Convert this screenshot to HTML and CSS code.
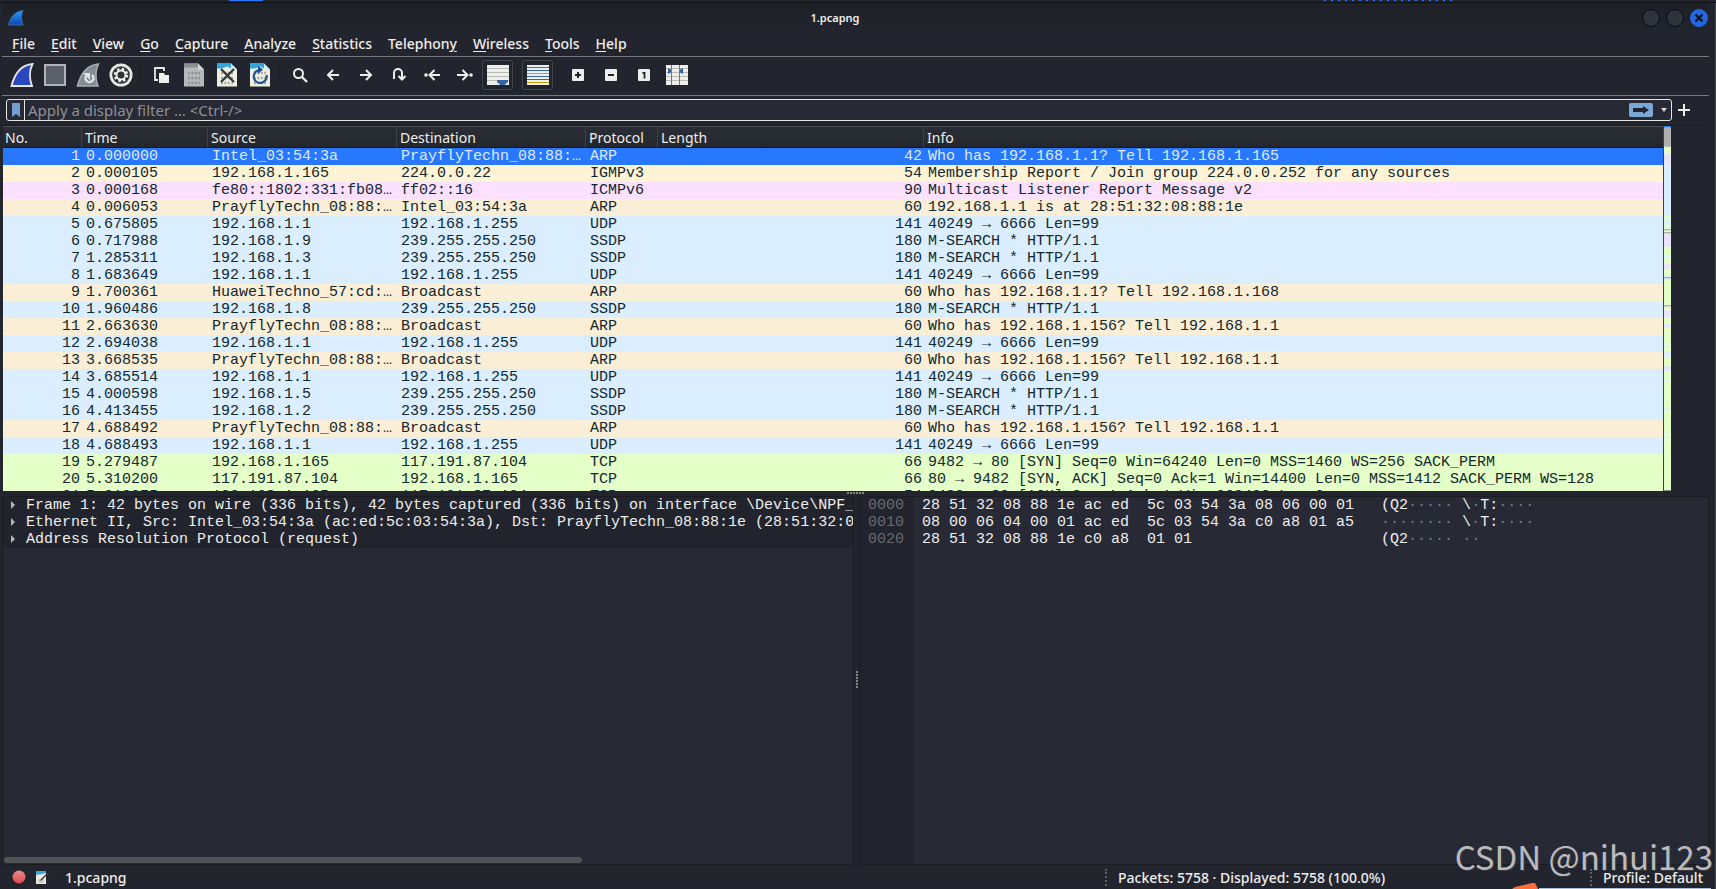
FILE: index.html
```
<!DOCTYPE html>
<html lang="en">
<head>
  <meta charset="UTF-8">
  <title>1.pcapng</title>
  <link rel="stylesheet" href="styles.css">
</head>
<body>
  <div class="desktop-strip"><span class="task"></span><span class="clock"></span></div>

  <div class="window">
    <header class="titlebar">
      <svg class="app-icon" width="16" height="16" viewBox="0 0 16 16"><defs><linearGradient id="fin" x1="0" y1="0" x2="0" y2="1"><stop offset="0" stop-color="#2f9bf2"/><stop offset="1" stop-color="#0a44b8"/></linearGradient></defs><path d="M.5 15C2 8 6 1.500 15 .5 13 5 13 10 15 15z" fill="url(#fin)" stroke="#3c6a9e"/></svg>
      <h1>1.pcapng</h1>
      <div class="window-buttons">
        <button aria-label="Minimize"></button>
        <button aria-label="Maximize"></button>
        <button class="close" aria-label="Close"><svg width="10" height="10" viewBox="0 0 10 10"><path d="M1.500 1.500l7 7M8.500 1.500l-7 7" stroke="#0b1020" stroke-width="2.400"/></svg></button>
      </div>
    </header>

    <nav class="menubar">
      <button><u>F</u>ile</button>
      <button><u>E</u>dit</button>
      <button><u>V</u>iew</button>
      <button><u>G</u>o</button>
      <button><u>C</u>apture</button>
      <button><u>A</u>nalyze</button>
      <button><u>S</u>tatistics</button>
      <button>Telephon<u>y</u></button>
      <button><u>W</u>ireless</button>
      <button><u>T</u>ools</button>
      <button><u>H</u>elp</button>
    </nav>

    <div class="toolbar">
      <button aria-label="Start capture"><svg width="24" height="24" viewBox="0 0 24 24"><path d="M1.500 23C4 13 10 2 22.500 1 19 8 19 15 22 23z" fill="#2a48bd" stroke="#e6e6e6" stroke-width="1.800"/></svg></button>
      <button aria-label="Stop capture"><svg width="24" height="24" viewBox="0 0 24 24"><rect x="2" y="2" width="20" height="20" fill="#5c6068" stroke="#b0b4bb" stroke-width="2"/></svg></button>
      <button aria-label="Restart capture"><svg width="24" height="24" viewBox="0 0 24 24"><path d="M1.500 23C4 13 10 2 22.500 1 19 8 19 15 22 23z" fill="#868a91" stroke="#a9acb2" stroke-width="1.500"/><path d="M16 12a4 4 0 1 1-6 1" fill="none" stroke="#e2e4e7" stroke-width="2.400"/><path d="M7 10h7v7z" fill="#e2e4e7"/></svg></button>
      <button aria-label="Capture options"><svg width="24" height="24" viewBox="0 0 24 24"><circle cx="12" cy="12" r="11.500" fill="#e8e8e4"/><circle cx="12" cy="12" r="8.800" fill="#303136"/><circle cx="12" cy="12" r="6" fill="none" stroke="#efefec" stroke-width="2.500" stroke-dasharray="2.400 2.312"/><circle cx="12" cy="12" r="4.500" fill="none" stroke="#efefec" stroke-width="2"/></svg></button>
      <span class="sep"></span>
      <button aria-label="Open"><svg width="16" height="16" viewBox="0 0 16 16"><path d="M5 13H2V1h9v3" fill="none" stroke="#e8e8e6" stroke-width="1.800"/><path d="M6 6h5l1 2h4v8H6z" fill="#eeeeec"/></svg></button>
      <button aria-label="Save"><svg width="20" height="24" viewBox="0 0 20 24"><path d="M0 .5h14l6 6v17H0z" fill="#b6b8ba"/><path d="M0 .5h14l3 3v1H0z" fill="#8b8e93"/><path d="M14 .5v6h6z" fill="#d4d5d7"/><g fill="none" stroke="#8d9094" stroke-width="2.600" stroke-dasharray="2 1.400"><path d="M4 10h12M4 15h12M4 20h12"/></g></svg></button>
      <button aria-label="Close file"><svg width="20" height="24" viewBox="0 0 20 24"><path d="M0 .5h14l6 6v17H0z" fill="#f0f0e0"/><path d="M0 .5h14l4 4-4 1-4-2-5 2H0z" fill="#34a4df"/><path d="M14 .5v6h6z" fill="#d7e9f0"/><g fill="none" stroke="#a8aaa2" stroke-width="2.400" stroke-dasharray="2 1.400"><path d="M4 10h12M4 15h12M4 20h12"/></g><path d="M4 6l13 13M17 6L4 19" stroke="#2e3439" stroke-width="2.200"/></svg></button>
      <button aria-label="Reload"><svg width="20" height="24" viewBox="0 0 20 24"><path d="M0 .5h14l6 6v17H0z" fill="#f0f0e0"/><path d="M0 .5h14l4 4-4 1-4-2-5 2H0z" fill="#34a4df"/><path d="M14 .5v6h6z" fill="#d7e9f0"/><g fill="none" stroke="#a8aaa2" stroke-width="2.400" stroke-dasharray="2 1.400"><path d="M4 10h12M4 15h12M4 20h12"/></g><path d="M16.500 12a6.500 6.500 0 1 1-6-5" fill="none" stroke="#1f4f95" stroke-width="2.200"/><path d="M8 3l5 3.500L8 11z" fill="#1f4f95"/></svg></button>
      <span class="sep"></span>
      <button aria-label="Find"><svg width="16" height="16" viewBox="0 0 16 16"><circle cx="6.500" cy="6.500" r="4.500" fill="none" stroke="#eeeeec" stroke-width="2"/><path d="M10 10l5 5" stroke="#eeeeec" stroke-width="2.400"/></svg></button>
      <button aria-label="Previous packet"><svg width="16" height="16" viewBox="0 0 16 16"><path d="M14 8H3M8 3L3 8l5 5" fill="none" stroke="#eeeeec" stroke-width="2"/></svg></button>
      <button aria-label="Next packet"><svg width="16" height="16" viewBox="0 0 16 16"><path d="M2 8h11M8 3l5 5-5 5" fill="none" stroke="#eeeeec" stroke-width="2"/></svg></button>
      <button aria-label="Go to packet"><svg width="16" height="16" viewBox="0 0 16 16"><path d="M3 12V6a4 4 0 0 1 8 0v6M7.500 9l3.500 3.500L14.500 9" fill="none" stroke="#eeeeec" stroke-width="2"/></svg></button>
      <button aria-label="First packet"><svg width="18" height="16" viewBox="0 0 18 16"><path d="M17 8H7M11.500 3l-5 5 5 5" fill="none" stroke="#eeeeec" stroke-width="2"/><circle cx="3" cy="8" r="1.800" fill="#eeeeec"/></svg></button>
      <button aria-label="Last packet"><svg width="18" height="16" viewBox="0 0 18 16"><path d="M1 8h10M6.500 3l5 5-5 5" fill="none" stroke="#eeeeec" stroke-width="2"/><circle cx="15" cy="8" r="1.800" fill="#eeeeec"/></svg></button>
      <button class="pressed" aria-label="Auto scroll"><svg width="22" height="20" viewBox="0 0 22 20"><path d="M0 0h22v20H0z" fill="#eeeeea"/><path d="M0 3.500h22M0 7.500h22M0 11.500h22M0 15.500h22" stroke="#b9bbb6"/><path d="M10 15h11v2l-3.500 3h-4L10 17z" fill="#3465a4"/></svg></button>
      <span class="sep"></span>
      <button class="pressed" aria-label="Colorize"><svg width="22" height="20" viewBox="0 0 22 20"><path d="M0 0h22v20H0z" fill="#eeeeea"/><path d="M0 2.500h22" stroke="#e03a2a"/><path d="M0 5.500h22" stroke="#3465a4"/><path d="M0 8.500h22" stroke="#73c22a"/><path d="M0 11.500h22" stroke="#3465a4"/><path d="M0 14.500h22" stroke="#75507b"/><path d="M0 17.500h22" stroke="#c4a000"/></svg></button>
      <span class="sep"></span>
      <button aria-label="Zoom in"><svg width="12" height="12" viewBox="0 0 12 12"><rect width="12" height="12" rx="1" fill="#eeeeec"/><path d="M3 6h6M6 3v6" stroke="#23252e" stroke-width="2"/></svg></button>
      <button aria-label="Zoom out"><svg width="12" height="12" viewBox="0 0 12 12"><rect width="12" height="12" rx="1" fill="#eeeeec"/><path d="M3 6h6" stroke="#23252e" stroke-width="2"/></svg></button>
      <button aria-label="Normal size"><svg width="12" height="12" viewBox="0 0 12 12"><rect width="12" height="12" rx="1" fill="#eeeeec"/><path d="M4.500 4h2v5.500" fill="none" stroke="#23252e" stroke-width="1.800"/></svg></button>
      <button aria-label="Resize columns"><svg width="22" height="20" viewBox="0 0 22 20"><path d="M0 0h22v20H0z" fill="#eeeeea"/><path d="M0 3.500h22M0 7.500h22M0 11.500h22M0 15.500h22" stroke="#b9bbb6"/><path d="M5.500 0v20M13.500 0v20" stroke="#777973"/><path d="M2 3l3 1.500v3L2 9zM17 3l-3 1.500v3L17 9z" fill="#3465a4"/></svg></button>
    </div>

    <div class="filterbar">
      <div class="filter-box">
        <button class="bookmark" aria-label="Bookmarks"><svg width="8" height="14" viewBox="0 0 8 14"><path d="M0 0h8v14l-4-3-4 3z" fill="#729fcf"/></svg></button>
        <input type="text" aria-label="Display filter" placeholder="Apply a display filter … &lt;Ctrl-/&gt;">
        <button class="apply" aria-label="Apply"><svg width="16" height="8" viewBox="0 0 16 8"><path d="M0 2h10V0l6 4-6 4V6H0z" fill="#1f2630"/></svg></button>
        <button class="recent" aria-label="Recent filters"><svg width="6" height="4" viewBox="0 0 6 4"><path d="M0 0h6L3 4z" fill="#d8d8d6"/></svg></button>
      </div>
      <button class="add" aria-label="Add filter button"><svg width="12" height="12" viewBox="0 0 12 12"><path d="M0 6h12M6 0v12" stroke="#eeeeec" stroke-width="2"/></svg></button>
    </div>

    <section class="packet-list">
      <div class="packet-scroll">
        <table>
          <colgroup><col class="no"><col class="time"><col class="src"><col class="dst"><col class="proto"><col class="len"><col></colgroup>
          <thead>
            <tr><th>No.</th><th>Time</th><th>Source</th><th>Destination</th><th>Protocol</th><th>Length</th><th>Info</th></tr>
          </thead>
          <tbody>
            <tr class="selected"><td>1</td><td>0.000000</td><td>Intel_03:54:3a</td><td>PrayflyTechn_08:88:…</td><td>ARP</td><td>42</td><td>Who has 192.168.1.1? Tell 192.168.1.165</td></tr>
            <tr class="igmp"><td>2</td><td>0.000105</td><td>192.168.1.165</td><td>224.0.0.22</td><td>IGMPv3</td><td>54</td><td>Membership Report / Join group 224.0.0.252 for any sources</td></tr>
            <tr class="icmp"><td>3</td><td>0.000168</td><td>fe80::1802:331:fb08…</td><td>ff02::16</td><td>ICMPv6</td><td>90</td><td>Multicast Listener Report Message v2</td></tr>
            <tr class="arp"><td>4</td><td>0.006053</td><td>PrayflyTechn_08:88:…</td><td>Intel_03:54:3a</td><td>ARP</td><td>60</td><td>192.168.1.1 is at 28:51:32:08:88:1e</td></tr>
            <tr class="udp"><td>5</td><td>0.675805</td><td>192.168.1.1</td><td>192.168.1.255</td><td>UDP</td><td>141</td><td>40249 → 6666 Len=99</td></tr>
            <tr class="udp"><td>6</td><td>0.717988</td><td>192.168.1.9</td><td>239.255.255.250</td><td>SSDP</td><td>180</td><td>M-SEARCH * HTTP/1.1</td></tr>
            <tr class="udp"><td>7</td><td>1.285311</td><td>192.168.1.3</td><td>239.255.255.250</td><td>SSDP</td><td>180</td><td>M-SEARCH * HTTP/1.1</td></tr>
            <tr class="udp"><td>8</td><td>1.683649</td><td>192.168.1.1</td><td>192.168.1.255</td><td>UDP</td><td>141</td><td>40249 → 6666 Len=99</td></tr>
            <tr class="arp"><td>9</td><td>1.700361</td><td>HuaweiTechno_57:cd:…</td><td>Broadcast</td><td>ARP</td><td>60</td><td>Who has 192.168.1.1? Tell 192.168.1.168</td></tr>
            <tr class="udp"><td>10</td><td>1.960486</td><td>192.168.1.8</td><td>239.255.255.250</td><td>SSDP</td><td>180</td><td>M-SEARCH * HTTP/1.1</td></tr>
            <tr class="arp"><td>11</td><td>2.663630</td><td>PrayflyTechn_08:88:…</td><td>Broadcast</td><td>ARP</td><td>60</td><td>Who has 192.168.1.156? Tell 192.168.1.1</td></tr>
            <tr class="udp"><td>12</td><td>2.694038</td><td>192.168.1.1</td><td>192.168.1.255</td><td>UDP</td><td>141</td><td>40249 → 6666 Len=99</td></tr>
            <tr class="arp"><td>13</td><td>3.668535</td><td>PrayflyTechn_08:88:…</td><td>Broadcast</td><td>ARP</td><td>60</td><td>Who has 192.168.1.156? Tell 192.168.1.1</td></tr>
            <tr class="udp"><td>14</td><td>3.685514</td><td>192.168.1.1</td><td>192.168.1.255</td><td>UDP</td><td>141</td><td>40249 → 6666 Len=99</td></tr>
            <tr class="udp"><td>15</td><td>4.000598</td><td>192.168.1.5</td><td>239.255.255.250</td><td>SSDP</td><td>180</td><td>M-SEARCH * HTTP/1.1</td></tr>
            <tr class="udp"><td>16</td><td>4.413455</td><td>192.168.1.2</td><td>239.255.255.250</td><td>SSDP</td><td>180</td><td>M-SEARCH * HTTP/1.1</td></tr>
            <tr class="arp"><td>17</td><td>4.688492</td><td>PrayflyTechn_08:88:…</td><td>Broadcast</td><td>ARP</td><td>60</td><td>Who has 192.168.1.156? Tell 192.168.1.1</td></tr>
            <tr class="udp"><td>18</td><td>4.688493</td><td>192.168.1.1</td><td>192.168.1.255</td><td>UDP</td><td>141</td><td>40249 → 6666 Len=99</td></tr>
            <tr class="tcp"><td>19</td><td>5.279487</td><td>192.168.1.165</td><td>117.191.87.104</td><td>TCP</td><td>66</td><td>9482 → 80 [SYN] Seq=0 Win=64240 Len=0 MSS=1460 WS=256 SACK_PERM</td></tr>
            <tr class="tcp"><td>20</td><td>5.310200</td><td>117.191.87.104</td><td>192.168.1.165</td><td>TCP</td><td>66</td><td>80 → 9482 [SYN, ACK] Seq=0 Ack=1 Win=14400 Len=0 MSS=1412 SACK_PERM WS=128</td></tr>
            <tr class="tcp"><td>21</td><td>5.310275</td><td>192.168.1.165</td><td>117.191.87.104</td><td>TCP</td><td>54</td><td>9482 → 80 [ACK] Seq=1 Ack=1 Win=262400 Len=0</td></tr>
          </tbody>
        </table>
      </div>
      <svg class="minimap" viewBox="0 0 7 1092" preserveAspectRatio="none">
        <path d="M0 0h7v1092H0z" fill="#e4ffc7"/>
        <path d="M0 0h7v6H0z" fill="#2777ff"/>
        <path d="M0 6h7v56H0z" fill="#e9ecf0"/>
        <path d="M0 110h7v160H0zM0 276h7v4H0zM0 284h7v10H0zM0 300h7v6H0zM0 390h7v3H0zM0 397h7v3H0zM0 447h7v14H0zM0 658h7v3H0zM0 675h7v12H0zM0 690h7v5H0zM0 729h7v6H0zM0 762h7v3H0zM0 843h7v3H0zM0 849h7v3H0zM0 918h7v3H0zM0 933h7v3H0z" fill="#daeeff"/>
        <path d="M0 83h7v27H0zM0 322h7v40H0zM0 412h7v17H0zM0 540h7v5H0zM0 552h7v21H0zM0 594h7v9H0zM0 720h7v9H0z" fill="#e8e3fa"/>
        <path d="M0 141h7v3H0zM0 171h7v3H0zM0 243h7v3H0zM0 255h7v3H0z" fill="#faeed7"/>
        <path d="M0 309h7v3H0zM0 318h7v3H0zM0 453h7v3H0zM0 537h7v3H0z" fill="#9a9c9c"/>
        <rect y="3" width="7" height="60" rx="3" fill="#b0b0b0"/>
      </svg>
    </section>

    <div class="splitter"></div>

    <div class="panes">
      <section class="details">
        <ul>
          <li>Frame 1: 42 bytes on wire (336 bits), 42 bytes captured (336 bits) on interface \Device\NPF_</li>
          <li>Ethernet II, Src: Intel_03:54:3a (ac:ed:5c:03:54:3a), Dst: PrayflyTechn_08:88:1e (28:51:32:0</li>
          <li>Address Resolution Protocol (request)</li>
        </ul>
        <div class="hscroll"></div>
      </section>
      <div class="vsplitter"></div>
      <section class="bytes">
        <pre class="offsets">0000
0010
0020</pre>
        <pre class="hex">28 51 32 08 88 1e ac ed  5c 03 54 3a 08 06 00 01
08 00 06 04 00 01 ac ed  5c 03 54 3a c0 a8 01 a5
28 51 32 08 88 1e c0 a8  01 01</pre>
        <pre class="ascii">(Q2<i>·····</i> \<i>·</i>T:<i>····</i>
<i>········</i> \<i>·</i>T:<i>····</i>
(Q2<i>·····</i> <i>··</i></pre>
      </section>
    </div>

    <footer class="statusbar">
      <button aria-label="Expert information"><svg width="14" height="14" viewBox="0 0 14 14"><defs><linearGradient id="led" x1="0" y1="0" x2="0" y2="1"><stop offset="0" stop-color="#e98d8d"/><stop offset="1" stop-color="#dc4b4b"/></linearGradient></defs><circle cx="7" cy="7" r="6.500" fill="url(#led)"/></svg></button>
      <button aria-label="Capture comment"><svg width="14" height="14" viewBox="0 0 14 14"><path d="M1 1h10v13H1z" fill="#e9e9df"/><path d="M1 1h10v2L7 4 1 5z" fill="#3ba6dc"/><path d="M3 10h6M3 12h6" stroke="#b0b2ac"/><path d="M13.500 1.500L6 9l-1.500 2L7 10l7-7z" fill="#33393d"/></svg></button>
      <span class="file">1.pcapng</span>
      <span class="packets">Packets: 5758 · Displayed: 5758 (100.0%)</span>
      <span class="profile">Profile: Default</span>
    </footer>
  </div>

  <div class="watermark">CSDN @nihui123</div>
  <svg class="corner" width="204" height="6" viewBox="0 0 204 6"><path d="M27 5.500h172" stroke="#a9bfdc"/><path d="M0 6l3-2L20 0h3l3 6z" fill="#ff6f3d"/></svg>
</body>
</html>
```
FILE: styles.css
```
* {
  box-sizing: border-box;
}

body {
  margin: 0;
  height: 100vh;
  display: flex;
  flex-direction: column;
  overflow: hidden;
  background: #1e2028;
  color: #eeeeec;
  font-family: "Noto Sans", sans-serif;
  font-size: 15px;
}

button {
  padding: 0;
  border: none;
  background: none;
  color: inherit;
  font: inherit;
  display: flex;
  align-items: center;
  justify-content: center;
}

svg {
  display: block;
}

.desktop-strip {
  height: 3px;
  display: flex;
  justify-content: space-between;
  background: #22252e;
  border-bottom: 1px solid #0c0d11;
}

.desktop-strip .task {
  width: 34px;
  height: 1px;
  margin-left: 229px;
  background: #2777ff;
}

.desktop-strip .clock {
  width: 130px;
  height: 1px;
  margin-right: 262px;
  background: repeating-linear-gradient(90deg, #2777ff 0 2px, transparent 2px 7px);
}

.window {
  flex: 1;
  min-height: 0;
  display: flex;
  flex-direction: column;
  padding-left: 2px;
  padding-right: 6px;
  background: #23252e;
  border-right: 1px solid #4b4b4d;
}

/* title and menu */

.titlebar {
  height: 30px;
  flex-shrink: 0;
  display: flex;
  align-items: center;
  padding: 0 1px 1px 6px;
  background: linear-gradient(#1e2028, #23252e);
}

.titlebar h1 {
  flex: 1;
  margin: 0;
  padding-left: 4px;
  font-size: 11px;
  font-weight: 600;
  text-align: center;
}

.window-buttons {
  display: flex;
  justify-content: flex-end;
  gap: 6px;
}

.window-buttons button {
  width: 18px;
  height: 18px;
  border: 1px solid #08090c;
  border-radius: 50%;
  background: #2f333e;
}

.window-buttons .close {
  border-color: #2368e0;
  background: #2469e4;
}

.menubar {
  height: 24px;
  flex-shrink: 0;
  display: flex;
  padding-left: 2px;
  padding-bottom: 2px;
  border-bottom: 1px solid #77787d;
}

.menubar button {
  padding: 0 8px;
  font-size: 14px;
  font-weight: 500;
  line-height: 20px;
  display: block;
}

.menubar u {
  text-underline-offset: 2px;
  text-decoration-thickness: 1px;
}

/* toolbar */

.toolbar {
  height: 39px;
  flex-shrink: 0;
  display: flex;
  align-items: center;
  padding-left: 3px;
  padding-bottom: 2px;
  border-bottom: 1px solid #77787d;
}

.toolbar button {
  width: 33px;
  height: 30px;
}

.toolbar .pressed {
  width: 31px;
  margin: 0 1px;
  border: 1px solid #42454c;
  border-radius: 3px;
  background: #1f252c;
}

.sep {
  width: 1px;
  height: 20px;
  margin: 0 3px;
  background: #1d1f26;
}

.filterbar {
  height: 29px;
  flex-shrink: 0;
  display: flex;
  align-items: center;
  gap: 6px;
  padding: 0 19px 1px 4px;
}

.filter-box {
  flex: 1;
  height: 22px;
  display: flex;
  align-items: center;
  border: 1px solid #e6e6e2;
  border-radius: 3px;
  background: #272934;
}

.bookmark {
  width: 18px;
  height: 20px;
  border-right: 1px solid #e6e6e2;
}

.filter-box input {
  flex: 1;
  height: 20px;
  padding: 0 3px;
  border: none;
  outline: none;
  background: none;
  color: #eeeeec;
  font: inherit;
}

.filter-box input::placeholder {
  color: #8f9096;
  opacity: 1;
}

.apply {
  width: 24px;
  height: 14px;
  border-radius: 2px;
  background: #7ba7d7;
}

.recent {
  width: 18px;
  height: 20px;
}

.recent svg {
  margin-left: 4px;
}

.add {
  width: 12px;
}

/* packet list */

.packet-list {
  flex: 365 1 0;
  min-height: 0;
  display: flex;
  margin-left: 1px;
  padding-right: 38px;
  border-top: 1px solid #1a1c22;
}

.packet-scroll {
  flex: 1;
  min-width: 0;
  overflow: hidden;
  border-right: 1px solid #3e4046;
}

table {
  width: 100%;
  table-layout: fixed;
  border-collapse: separate;
  border-spacing: 0;
  font-family: "Liberation Mono", monospace;
  line-height: 17px;
}

.no {
  width: 79px;
}

.time {
  width: 126px;
}

.src,
.dst {
  width: 189px;
}

.proto {
  width: 72px;
}

.len {
  width: 266px;
}

th {
  height: 22px;
  padding: 2px 3px 0;
  border-top: 1px solid #4a4c50;
  border-right: 1px solid #3e4147;
  border-bottom: 1px solid #15171c;
  background: linear-gradient(#2a2d35, #23272d);
  font-family: "Noto Sans", sans-serif;
  font-size: 14px;
  font-weight: 400;
  line-height: 18px;
  text-align: left;
}

th:first-child {
  padding-left: 2px;
}

th:last-child {
  border-right: none;
}

td {
  height: 17px;
  padding: 0 0 0 4px;
  overflow: hidden;
  white-space: nowrap;
}

td:nth-child(1),
td:nth-child(6) {
  padding: 0 2px 0 0;
  text-align: right;
}

tbody tr {
  color: #12272e;
}

tbody .selected {
  background: #2777ff;
  color: #dfeaff;
}

.igmp {
  background: #fff3d6;
}

.icmp {
  background: #fce0ff;
}

.arp {
  background: #faeed7;
}

.udp {
  background: #daeeff;
}

.tcp {
  background: #e4ffc7;
}

.minimap {
  width: 7px;
  height: 100%;
}

.splitter {
  height: 5px;
  flex-shrink: 0;
  background: repeating-linear-gradient(90deg, #85878b 0 2px, transparent 2px 3px) center / 18px 2px no-repeat;
}

/* details and bytes */

.panes {
  flex: 370 1 0;
  min-height: 0;
  display: flex;
  font-family: "Liberation Mono", monospace;
  line-height: 17px;
}

.details {
  flex: 852 1 0;
  min-width: 0;
  display: flex;
  flex-direction: column;
  justify-content: space-between;
  padding-bottom: 1px;
  border: 1px solid #1a1c22;
  background: #272934;
}

.details ul {
  margin: 0;
  padding: 0;
  list-style: none;
}

.details li {
  display: flex;
  align-items: center;
  height: 17px;
  overflow: hidden;
  white-space: nowrap;
  background: #22242d;
}

.details li::before {
  content: "";
  flex-shrink: 0;
  margin-left: 8px;
  margin-right: 11px;
  border: 4px solid transparent;
  border-left-color: #b4b5b8;
  border-right: 0;
}

.hscroll {
  width: 68%;
  height: 6px;
  margin-left: 1px;
  border-radius: 3px;
  background: #525356;
}

.vsplitter {
  width: 5px;
  background: repeating-linear-gradient(#85878b 0 2px, transparent 2px 3px) center / 2px 18px no-repeat;
}

.bytes {
  flex: 850 1 0;
  min-width: 0;
  display: flex;
  border: 1px solid #1a1c22;
  background: #272934;
}

.bytes pre {
  margin: 0;
  font: inherit;
}

.bytes .offsets {
  width: 53px;
  padding-left: 8px;
  background: #22242d;
  color: #686a70;
}

.bytes .hex {
  padding-left: 9px;
}

.bytes .ascii {
  padding-left: 27px;
}

.bytes i {
  font-style: normal;
  color: #777980;
}

/* status bar */

.statusbar {
  height: 24px;
  flex-shrink: 0;
  display: flex;
  align-items: center;
  gap: 9px;
  padding: 0 6px 0 10px;
  font-size: 14px;
  font-weight: 500;
}

.statusbar .file {
  flex: 1;
  padding-left: 7px;
}

.packets,
.profile {
  padding-left: 11px;
  border-left: 2px dotted #5e6066;
  line-height: 17px;
  white-space: nowrap;
}

.packets {
  width: 476px;
}

.watermark {
  position: absolute;
  right: 3px;
  bottom: 10px;
  font-family: "Noto Sans CJK SC", sans-serif;
  font-size: 33px;
  line-height: 46px;
  color: #b9babd;
  text-shadow: 1px 1px 1px #3a3a3e;
}

.corner {
  position: absolute;
  right: 0;
  bottom: 0;
}
```
